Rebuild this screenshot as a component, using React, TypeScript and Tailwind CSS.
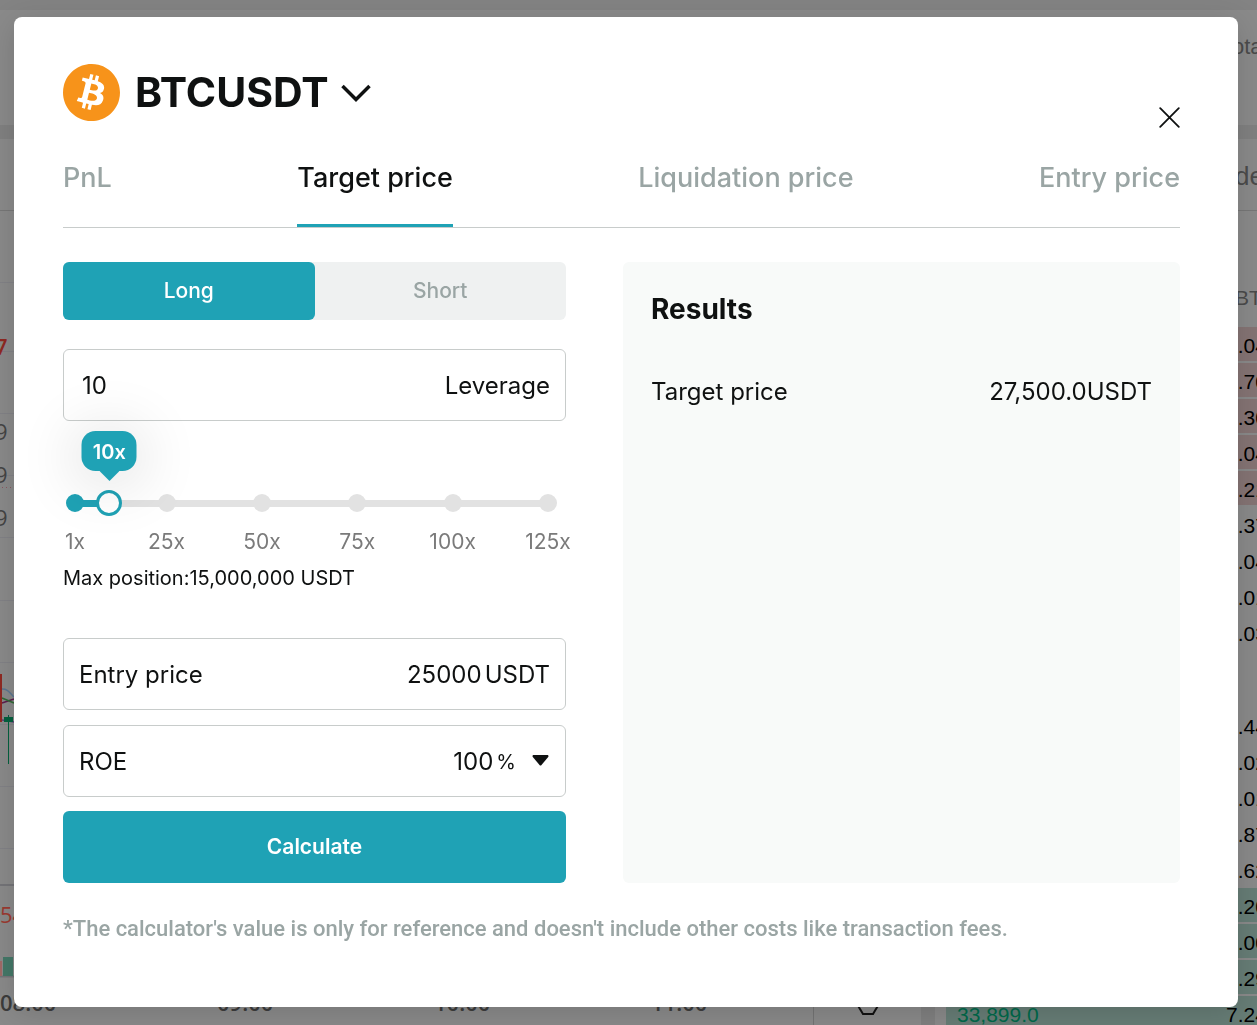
import { useState } from 'react';
import clsx from 'clsx';
import { SiBitcoin } from 'react-icons/si';

const TABS = ['PnL', 'Target price', 'Liquidation price', 'Entry price'];
const MARKS = [1, 25, 50, 75, 100, 125];
const MIN = 1;
const MAX = 125;

const ASKS = ['0.04', '0.70', '0.30', '0.04', '0.21', '0.37', '0.04', '0.01', '0.03'];
const BIDS = ['0.44', '0.02', '0.01', '0.87', '0.62', '0.20', '0.00', '0.29', '7.24'];
const GRID_LINES = [143, 212, 274, 336, 398, 461, 523, 585, 647, 709];
const TIMES = ['08:00', '09:00', '10:00', '11:00'];

function percent(value: number) {
  return ((value - MIN) / (MAX - MIN)) * 100;
}

function ChartPanel() {
  return (
    <div className="flex min-w-0 flex-1 flex-col overflow-hidden">
      <svg width="813" height="848" className="block shrink-0 font-['Open_Sans',sans-serif] text-[22px]" fill="none">
        <path d="M0 71.5H813" stroke="#777" />
        {GRID_LINES.map((y) => (
          <path key={y} d={`M0 ${y + 0.5}H813`} stroke="#828286" />
        ))}
        <path d="M0 746H813M0 837.5H813" stroke="#747478" strokeWidth="2" />
        <path d="M2 348.5H14" stroke="#8a5560" strokeDasharray="1 3" />
        <text x="-5" y="216" fill="#8f2922" className="font-semibold">7</text>
        <text x="-5" y="301" fill="#444">9</text>
        <text x="-5" y="344" fill="#444">9</text>
        <text x="-5" y="387" fill="#444">9</text>
        <path d="M2 550C8 550 9 553 14 558" stroke="#5b7691" strokeWidth="1.5" />
        <path d="M2 564L14 560" stroke="#5e1f4e" strokeWidth="1.5" />
        <path d="M2 559L14 564" stroke="#2f6b35" strokeWidth="1.5" />
        <path d="M2 581L14 583" stroke="#5d3d78" strokeWidth="1.5" />
        <path d="M0 535H2V583H0z" fill="#8f2922" />
        <path d="M4 578H13V583H4zM8 576H9V625H8z" fill="#04613f" />
        <text x="0" y="784" fill="#9c3a31">54</text>
        <path d="M0 822H2V837H0z" fill="#a16a67" />
        <path d="M3 818H13V837H3z" fill="#447868" />
      </svg>
      <div className="flex gap-[159px] font-['Open_Sans',sans-serif] text-[22px] leading-[30px] font-semibold text-[#3c3c3c]">
        {TIMES.map((time) => (
          <span key={time} className="w-[58px] shrink-0">{time}</span>
        ))}
      </div>
    </div>
  );
}

function BookRow({ amount, price, side }: { amount: string; price?: string; side?: 'ask' | 'bid' }) {
  return (
    <div
      className={clsx(
        'mb-[2px] flex h-[34px] shrink-0 items-center justify-end pt-[4px] pl-[11px] leading-[30px]',
        side === 'ask' && 'bg-[#857474]',
        side === 'bid' && 'bg-[#677d76]',
      )}
    >
      {price && <span className="mr-auto text-[#00694a]">{price}</span>}
      <span className="w-[31px] shrink-0 whitespace-nowrap text-black">{amount}</span>
    </div>
  );
}

function OrderBook() {
  return (
    <div className="flex w-[311px] shrink-0 flex-col overflow-hidden font-['Liberation_Sans',Arial,sans-serif] text-[21px] text-[#4b4b4b]">
      <div className="flex h-[72px] shrink-0 items-center justify-end border-b border-[#777] pt-[4px] text-[26px]">
        <span className="w-[22px] whitespace-nowrap">der</span>
      </div>
      <div className="flex h-[116px] shrink-0 items-end justify-end pb-[14px] leading-[30px]">
        <span className="w-[22px]">BTC</span>
      </div>
      {ASKS.map((amount, i) => (
        <BookRow key={i} amount={amount} side={i < 5 ? 'ask' : undefined} />
      ))}
      <div className="h-[57px] shrink-0" />
      {BIDS.map((amount, i) => (
        <BookRow
          key={i}
          amount={amount}
          side={i > 4 ? 'bid' : undefined}
          price={i === BIDS.length - 1 ? '33,899.0' : undefined}
        />
      ))}
    </div>
  );
}

// Trading page that sits dimmed behind the calculator
function TradingPage() {
  return (
    <div aria-hidden="true" className="flex h-screen flex-col overflow-hidden bg-[#8a8a8a]">
      <div className="h-[10px] shrink-0 bg-[#838383]" />
      <div className="flex h-[115px] shrink-0 flex-col items-end pt-[22px] font-['Liberation_Sans',Arial,sans-serif] text-[22px] leading-[30px] text-[#4b4b4b]">
        <span className="w-[36px] whitespace-nowrap">Total</span>
      </div>
      <div className="h-[14px] shrink-0 bg-[#818181]" />
      <div className="flex min-h-0 flex-1">
        <ChartPanel />
        <div className="flex w-[108px] shrink-0 items-end justify-center border-l border-[#747474] pb-[10px]">
          <svg width="24" height="22" viewBox="0 0 24 22" fill="none" stroke="#111" strokeWidth="2">
            <path d="M6 1H18L23 11L17 21H7L1 11z" />
          </svg>
        </div>
        <div className="w-[14px] shrink-0 bg-[#808080]" />
        <div className="w-[11px] shrink-0" />
        <OrderBook />
      </div>
    </div>
  );
}

function LeverageSlider({ value, onChange }: { value: number; onChange: (v: number) => void }) {
  return (
    <div className="mt-[69px] mr-[18px] ml-[12px]">
      <div className="relative flex h-[26px] items-center">
        <div className="h-[7px] w-full bg-[#e2e2e2]">
          <div className="h-full bg-[#1fa2b5]" style={{ width: `${percent(value)}%` }} />
        </div>
        {MARKS.map((mark) => (
          <span
            key={mark}
            className={clsx(
              'absolute size-[18px] -translate-x-1/2 rounded-full',
              mark <= value ? 'bg-[#1fa2b5]' : 'bg-[#e2e2e2]',
            )}
            style={{ left: `${percent(mark)}%` }}
          />
        ))}
        <input
          type="range"
          aria-label="Leverage"
          min={MIN}
          max={MAX}
          value={value}
          onChange={(e) => onChange(Number(e.target.value))}
          className="absolute -inset-x-[13px] h-[26px] cursor-pointer appearance-none bg-transparent [&::-webkit-slider-thumb]:size-[26px] [&::-webkit-slider-thumb]:appearance-none [&::-webkit-slider-thumb]:rounded-full [&::-webkit-slider-thumb]:border-3 [&::-webkit-slider-thumb]:border-[#1fa2b5] [&::-webkit-slider-thumb]:bg-white"
        />
        <output
          className="absolute bottom-[45px] flex h-[40px] w-[55px] -translate-x-1/2 items-center justify-center rounded-[14px] bg-[#1fa2b5] pt-[2px] text-[20px] font-semibold text-white shadow-[0_6px_60px_8px_rgba(0,0,0,0.12)]"
          style={{ left: `${percent(value)}%` }}
        >
          {value}x
          <svg width="20" height="10" className="absolute top-full" fill="#1fa2b5">
            <path d="M0 0H20L10 10z" />
          </svg>
        </output>
      </div>
      <div className="relative mt-[13px] h-[26px] text-[21px] leading-[26px] text-[#7a7a7a]">
        {MARKS.map((mark) => (
          <span key={mark} className="absolute -translate-x-1/2" style={{ left: `${percent(mark)}%` }}>
            {mark}x
          </span>
        ))}
      </div>
    </div>
  );
}

export default function App() {
  const [tab, setTab] = useState('Target price');
  const [side, setSide] = useState('Long');
  const [leverage, setLeverage] = useState(10);
  const [entry, setEntry] = useState('25000');
  const [roe, setRoe] = useState('100');

  const field = 'flex h-[72px] items-center rounded-[6px] border border-[#c8cccb] px-[15px] pt-[2px] text-[24px]';

  return (
    <>
      <TradingPage />
      <div className="fixed inset-0 overflow-hidden pt-[17px] pr-[19px] pl-[14px] font-['Inter',sans-serif]">
        <div
          role="dialog"
          aria-label="Calculator"
          className="rounded-[8px] bg-white pt-[47px] pr-[58px] pb-[62px] pl-[49px] text-[#0f1111] shadow-[0_6px_30px_rgba(0,0,0,0.15)]"
        >
          {/* Header */}
          <div className="flex h-[64px] items-start justify-between">
            <button className="flex h-[57px] items-center">
              <SiBitcoin className="size-[57px] text-[#f7931a]" />
              <span className="ml-[15px] text-[41px] font-bold">BTCUSDT</span>
              <svg width="30" height="18" viewBox="0 0 30 18" fill="none" className="ml-[12px]" stroke="currentColor" strokeWidth="3.5">
                <path d="M1.5 2L15 15.5L28.5 2" />
              </svg>
            </button>
            <button aria-label="Close" className="self-end">
              <svg width="21" height="21" viewBox="0 0 21 21" stroke="currentColor" strokeWidth="1.8" strokeLinecap="round">
                <path d="M1.2 1.2L19.8 19.8M19.8 1.2L1.2 19.8" />
              </svg>
            </button>
          </div>

          {/* Tabs */}
          <div className="flex justify-between border-b border-[#c8cccb]">
            {TABS.map((name) => (
              <button
                key={name}
                onClick={() => setTab(name)}
                className={clsx(
                  'border-b-3 pt-[33px] pb-[29px] text-[27px] leading-[34px] font-medium',
                  name === tab ? 'border-[#1fa2b5]' : 'border-transparent text-[#9aa5a4]',
                )}
              >
                {name}
              </button>
            ))}
          </div>

          <div className="mt-[34px] grid grid-cols-[503fr_557fr] gap-[57px]">
            <form onSubmit={(e) => e.preventDefault()}>
              <div className="grid h-[58px] grid-cols-2 rounded-[6px] bg-[#eff1f1]">
                {['Long', 'Short'].map((name) => (
                  <button
                    key={name}
                    type="button"
                    onClick={() => setSide(name)}
                    className={clsx(
                      'rounded-[6px] text-[21px] font-medium',
                      name === side ? 'bg-[#1fa2b5] text-white' : 'text-[#9aa5a4]',
                    )}
                  >
                    {name}
                  </button>
                ))}
              </div>

              <div className={clsx(field, 'mt-[29px]')}>
                <input
                  id="leverage"
                  value={leverage}
                  onChange={(e) => setLeverage(Number(e.target.value) || MIN)}
                  className="w-0 flex-1 pl-[3px] outline-none"
                />
                <label htmlFor="leverage">Leverage</label>
              </div>

              <LeverageSlider value={leverage} onChange={setLeverage} />
              <p className="mt-[9px] text-[20px] leading-[28px]">Max position:15,000,000 USDT</p>

              <div className={clsx(field, 'mt-[46px]')}>
                <label htmlFor="entry">Entry price</label>
                <input
                  id="entry"
                  value={entry}
                  onChange={(e) => setEntry(e.target.value)}
                  className="w-0 flex-1 text-right outline-none"
                />
                <span className="ml-[3px]">USDT</span>
              </div>

              <div className={clsx(field, 'mt-[15px]')}>
                <label htmlFor="roe">ROE</label>
                <input
                  id="roe"
                  value={roe}
                  onChange={(e) => setRoe(e.target.value)}
                  className="w-0 flex-1 text-right outline-none"
                />
                <span className="ml-[3px] text-[20px]">%</span>
                <button type="button" aria-label="Change target" className="mr-[1px] mb-[3px] ml-[16px]">
                  <svg width="17" height="11" viewBox="0 0 17 11" fill="currentColor">
                    <path d="M1.2 0H15.8Q17 .8 16.2 2L9.3 10.2Q8.5 11 7.7 10.2L.8 2Q0 .8 1.2 0z" />
                  </svg>
                </button>
              </div>

              <button className="mt-[14px] h-[72px] w-full rounded-[6px] bg-[#1fa2b5] text-[21px] font-semibold text-white">
                Calculate
              </button>
            </form>

            <section className="rounded-[6px] bg-[#f8faf9] px-[28px] pt-[30px]">
              <h2 className="text-[28px] leading-[34px] font-bold">Results</h2>
              <div className="mt-[49px] flex justify-between text-[24px] leading-[34px]">
                <span>Target price</span>
                <span>27,500.0USDT</span>
              </div>
            </section>
          </div>

          <p className="mt-[30px] font-['Roboto',sans-serif] text-[22px] leading-[32px] font-medium text-[#9aa5a4]">
            *The calculator's value is only for reference and doesn't include other costs like transaction fees.
          </p>
        </div>
      </div>
    </>
  );
}
